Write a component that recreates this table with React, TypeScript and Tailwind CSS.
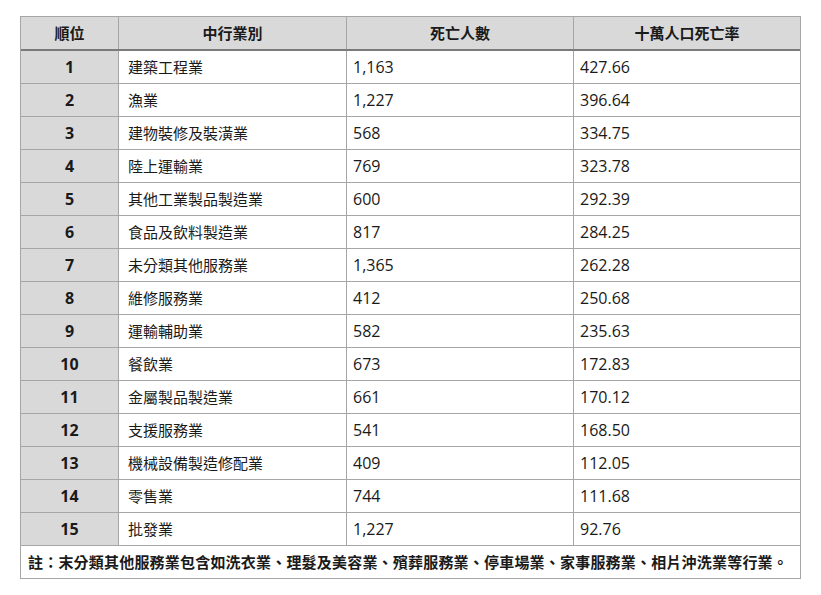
import React from "react";

const rows: [string, string, string, string][] = [
  ["1", "建築工程業", "1,163", "427.66"],
  ["2", "漁業", "1,227", "396.64"],
  ["3", "建物裝修及裝潢業", "568", "334.75"],
  ["4", "陸上運輸業", "769", "323.78"],
  ["5", "其他工業製品製造業", "600", "292.39"],
  ["6", "食品及飲料製造業", "817", "284.25"],
  ["7", "未分類其他服務業", "1,365", "262.28"],
  ["8", "維修服務業", "412", "250.68"],
  ["9", "運輸輔助業", "582", "235.63"],
  ["10", "餐飲業", "673", "172.83"],
  ["11", "金屬製品製造業", "661", "170.12"],
  ["12", "支援服務業", "541", "168.50"],
  ["13", "機械設備製造修配業", "409", "112.05"],
  ["14", "零售業", "744", "111.68"],
  ["15", "批發業", "1,227", "92.76"],
];

const font = { fontFamily: '"Open Sans", "Noto Sans CJK TC", sans-serif' };

export default function App() {
  return (
    <div className="w-[821px] h-[595px] bg-white pt-[16px] pl-[20px] text-[15px] text-[#1a1a1a]" style={font}>
      <div className="w-[781px] border border-[#a6a6a6]">
        <div className="grid grid-cols-[98px_228px_227px_226px] h-[34px] bg-[#d9d9d9] border-b-2 border-[#7a7a7a] font-bold">
          <div className="flex items-center justify-center border-r border-[#a6a6a6]">順位</div>
          <div className="flex items-center justify-center border-r border-[#a6a6a6]">中行業別</div>
          <div className="flex items-center justify-center border-r border-[#a6a6a6]">死亡人數</div>
          <div className="flex items-center justify-center">十萬人口死亡率</div>
        </div>
        {rows.map((r) => (
          <div key={r[0]} className="grid grid-cols-[98px_228px_227px_226px] h-[33px] border-b border-[#a6a6a6]">
            <div className="flex items-center justify-center bg-[#d9d9d9] border-r border-[#a6a6a6] font-bold text-[16px]">{r[0]}</div>
            <div className="flex items-center pl-[9px] border-r border-[#a6a6a6]">{r[1]}</div>
            <div className="flex items-center pl-[6px] border-r border-[#a6a6a6] text-[16px]">{r[2]}</div>
            <div className="flex items-center pl-[6px] text-[16px]">{r[3]}</div>
          </div>
        ))}
        <div className="h-[32px] flex items-center pl-[7px] font-bold tracking-[0.2px]">
          註：末分類其他服務業包含如洗衣業、理髮及美容業、殯葬服務業、停車場業、家事服務業、相片沖洗業等行業。
        </div>
      </div>
    </div>
  );
}
